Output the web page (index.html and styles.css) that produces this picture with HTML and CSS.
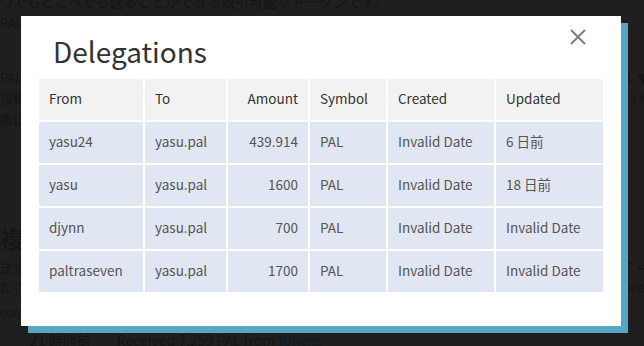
FILE: index.html
```html
<!DOCTYPE html>
<html lang="ja">
<head>
<meta charset="utf-8">
<title>Delegations</title>
<link rel="stylesheet" href="styles.css">
</head>
<body>
<div class="bg">
  <div class="line l1"><span>いつでもどこへでも送ることができる取引可能なトークンです。</span></div>
  <div class="line l2"><span>PAL(</span></div>
  <div class="line l3"><span>PAL</span><span>L ▼</span></div>
  <div class="line l4"><span>投稿</span><span>) ©</span></div>
  <div class="line l5"><span>能に</span></div>
  <div class="line l6"><span>複</span></div>
  <div class="line l7"><span>送金</span><span>で &lt;</span></div>
  <div class="line l8"><span>ださ</span><span>ure</span></div>
  <div class="line l9"><span>conf</span></div>
  <div class="line l10"><span class="ago">21 時間前</span><span>Received 7.259 PAL from <span class="link">tokens</span></span></div>
</div>

<div class="modal">
  <div class="modal-head">
    <h2 class="modal-title">Delegations</h2>
    <button class="close" aria-label="Close">
      <svg width="16" height="16" viewBox="0 0 16 16"><path d="M1 1 L15 15 M15 1 L1 15" stroke="#7b7f84" stroke-width="2" fill="none"/></svg>
    </button>
  </div>
  <div class="table-wrap">
  <table class="deleg">
    <thead>
      <tr><th>From</th><th>To</th><th class="num">Amount</th><th>Symbol</th><th>Created</th><th>Updated</th></tr>
    </thead>
    <tbody>
      <tr><td>yasu24</td><td>yasu.pal</td><td class="num">439.914</td><td>PAL</td><td>Invalid Date</td><td>6 日前</td></tr>
      <tr><td>yasu</td><td>yasu.pal</td><td class="num">1600</td><td>PAL</td><td>Invalid Date</td><td>18 日前</td></tr>
      <tr><td>djynn</td><td>yasu.pal</td><td class="num">700</td><td>PAL</td><td>Invalid Date</td><td>Invalid Date</td></tr>
      <tr><td>paltraseven</td><td>yasu.pal</td><td class="num">1700</td><td>PAL</td><td>Invalid Date</td><td>Invalid Date</td></tr>
    </tbody>
  </table>
  </div>
</div>
</body>
</html>
```

FILE: styles.css
```css
html, body {
  margin: 0;
  padding: 0;
  background: #1f1f1f;
  overflow: hidden;
  height: 346px;
}
body {
  font-family: "Noto Sans CJK JP", "Noto Sans", sans-serif;
  position: relative;
}
.bg {
  color: #141414;
  display: flex;
  flex-direction: column;
  font-size: 13px;
}
.line {
  display: flex;
  justify-content: space-between;
  white-space: nowrap;
  line-height: 14px;
  height: 14px;
}
.l1 { margin-top: -7px; font-size: 14px; text-indent: -15px; line-height: 16px; height: 16px; }
.l2 { margin-top: 7px; }
.l3 { margin-top: 41px; }
.l3 span:last-child, .l4 span:last-child { margin-right: -6px; }
.l4 { margin-top: 6px; }
.l5 { margin-top: 7px; }
.l6 { margin-top: 100px; font-size: 24px; line-height: 24px; height: 24px; }
.l7 { margin-top: 10px; }
.l8 { margin-top: 6px; }
.l9 { margin-top: 11px; font-size: 12px; }
.l10 { margin-top: 14px; padding-left: 30px; justify-content: flex-start; gap: 26px; font-size: 14px; }
.link { color: #101a24; }

.modal {
  position: absolute;
  left: 21px;
  top: 16px;
  width: 600px;
  height: 310px;
  box-sizing: border-box;
  background: #fff;
  box-shadow: 7px 7px 0 #56a7c3;
  padding: 0 18px;
}
.modal-head {
  display: flex;
  justify-content: space-between;
  align-items: flex-start;
  height: 63px;
}
.modal-title {
  margin: 17px 0 0 14px;
  font-weight: 400;
  font-size: 28px;
  line-height: 36px;
  color: #333;
}
.close {
  margin: 13px 17px 0 0;
  padding: 0;
  border: 0;
  background: none;
  width: 16px;
  height: 16px;
  display: flex;
}
.table-wrap {
  width: 564px;
  height: 213px;
  overflow: hidden;
}
.deleg {
  width: 568px;
  margin: -2px;
  border-collapse: separate;
  border-spacing: 2px;
  font-size: 13.5px;
  table-layout: fixed;
}
.deleg th, .deleg td {
  height: 38px;
  padding: 0 10px 3px;
  text-align: left;
  white-space: nowrap;
}
.deleg th {
  background: #f2f2f2;
  color: #333;
  font-weight: 400;
}
.deleg td {
  background: #e0e6f2;
  color: #555;
}
.deleg .num { text-align: right; }
.deleg th:nth-child(1) { width: 84px; }
.deleg th:nth-child(2) { width: 61px; }
.deleg th:nth-child(3) { width: 60px; }
.deleg th:nth-child(4) { width: 56px; }
.deleg th:nth-child(5) { width: 86px; }
```
